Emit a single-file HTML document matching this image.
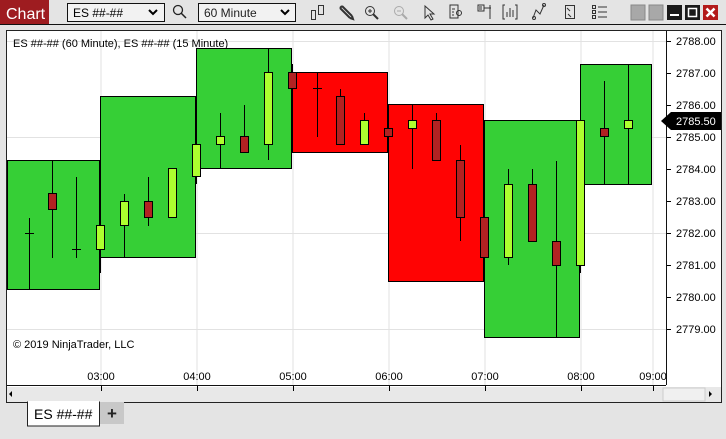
<!DOCTYPE html>
<html><head><meta charset="utf-8"><style>
body{margin:0;width:726px;height:434px;background:#e4e4e4;overflow:hidden;font-family:"Liberation Sans",sans-serif}
</style></head><body>
<svg width="726" height="434" xmlns="http://www.w3.org/2000/svg" font-family="Liberation Sans, sans-serif">
<rect width="726" height="434" fill="#e4e4e4"/>
<!-- toolbar -->
<rect x="0" y="0" width="49" height="24" fill="#9e1c20"/>
<text x="6" y="19" font-size="16" fill="#fff">Chart</text>
<rect x="67.5" y="3.5" width="97" height="18" fill="#f2f2f2" stroke="#111"/>
<text x="73" y="17" font-size="12" fill="#000">ES ##-##</text>
<path d="M149 10l4 4 4-4" stroke="#000" stroke-width="2" fill="none"/>
<circle cx="178" cy="10" r="4.5" stroke="#222" stroke-width="1.3" fill="none"/><path d="M181 13l5 5" stroke="#222" stroke-width="1.5"/>
<rect x="198.5" y="3.5" width="97" height="18" fill="#f2f2f2" stroke="#111"/>
<text x="204" y="17" font-size="12" fill="#222">60 Minute</text>
<path d="M281 10l4 4 4-4" stroke="#000" stroke-width="2" fill="none"/>
<g stroke="#333" fill="none" stroke-width="1">
<rect x="311.5" y="10.5" width="4" height="9"/><rect x="318.5" y="5.5" width="5" height="9"/>
<path d="M340 8l10 10M342 6l10 10M340 8l2-2M350 18l3 1-1-3" stroke-width="2"/>
<circle cx="370" cy="11" r="4.5"/><path d="M368 11h4M370 9v4"/><path d="M373 14l5 5" stroke-width="2"/>
<g stroke="#aaa"><circle cx="399" cy="11" r="4.5"/><path d="M397 11h4"/><path d="M402 14l5 5" stroke-width="2"/></g>
<path d="M425 6v12l3-3 3 5 2-1-3-5h4z"/>
<path d="M450 5h8v13h-8zM452 9h3M452 12h2M452 15h2"/><circle cx="459" cy="13" r="2.5"/>
<path d="M478 5h6v6h-6zM484 8h7M490 5v14M479 7h3M479 9h3"/>
<path d="M505 5h-2v14h2M515 5h2v14h-2M507 12v5M510 8v9M513 10v7"/>
<path d="M533 18l3-8 4 4 4-9" /><circle cx="534" cy="18" r="1.5"/><circle cx="544" cy="5" r="1.5"/>
<path d="M565.5 5.5h9v13h-9zM567 8l3 3M568 14l3 3"/>
<path d="M592.5 5.5h3v3h-3zM592.5 10.5h3v3h-3zM592.5 15.5h3v3h-3zM598 7h9M598 12h9M598 17h9"/>
</g>
<rect x="631" y="5" width="14" height="15" fill="#a8a8a8" stroke="#888"/>
<rect x="649" y="5" width="14" height="15" fill="#a8a8a8" stroke="#888"/>
<rect x="667" y="5" width="15" height="15" fill="#1a1a1a"/><rect x="670" y="14" width="9" height="2" fill="#fff"/>
<rect x="685" y="5" width="15" height="15" fill="#1a1a1a"/><rect x="688.5" y="8.5" width="8" height="8" fill="none" stroke="#fff" stroke-width="1.5"/>
<rect x="703" y="5" width="15" height="15" fill="#b31a1a"/><path d="M706.5 8.5l8 8M714.5 8.5l-8 8" stroke="#fff" stroke-width="2.5"/>
<path d="M0 24.5h726" stroke="#111"/>
<!-- panel -->
<rect x="6.5" y="30.5" width="715" height="372" fill="#fff" stroke="#222"/>
<rect x="7" y="387" width="714" height="15" fill="#e8e8e8"/>
<rect x="663" y="388" width="42" height="13" fill="#f0f0f0" stroke="#ccc"/>
<path d="M12 391v6l-3-3z M709 391v6l3-3z" fill="#000"/>
<g stroke="#e2e2e2" stroke-width="1">
<path d="M101 31v354M197 31v354M293 31v354M389 31v354M485 31v354M581 31v354M653 31v354"/>
<path d="M7 41.5h659M7 137.5h659M7 233.5h659M7 329.5h659"/>
</g>
<path d="M666.5 31v354M7 385.5h659" stroke="#111"/>
<g font-size="11" fill="#000">
<text x="13" y="47">ES ##-## (60 Minute), ES ##-## (15 Minute)</text>
<text x="13" y="348">© 2019 NinjaTrader, LLC</text>
</g>
<!-- price axis -->
<g stroke="#000"><path d="M667 41.5h4M667 73.5h4M667 105.5h4M667 137.5h4M667 169.5h4M667 201.5h4M667 233.5h4M667 265.5h4M667 297.5h4M667 329.5h4"/></g>
<g font-size="11" fill="#000">
<text x="676" y="45">2788.00</text><text x="676" y="77">2787.00</text><text x="676" y="109">2786.00</text><text x="676" y="141">2785.00</text><text x="676" y="173">2784.00</text><text x="676" y="205">2783.00</text><text x="676" y="237">2782.00</text><text x="676" y="269">2781.00</text><text x="676" y="301">2780.00</text><text x="676" y="333">2779.00</text>
</g>
<path d="M661 121l10-9h50v18h-50z" fill="#000"/>
<text x="676" y="125" font-size="11" fill="#fff">2785.50</text>
<!-- time axis -->
<g stroke="#000"><path d="M101.5 386v5M197.5 386v5M293.5 386v5M389.5 386v5M485.5 386v5M581.5 386v5M653.5 386v5"/></g>
<g font-size="11" fill="#000" text-anchor="middle">
<text x="101" y="380">03:00</text><text x="197" y="380">04:00</text><text x="293" y="380">05:00</text><text x="389" y="380">06:00</text><text x="485" y="380">07:00</text><text x="581" y="380">08:00</text><text x="653" y="380">09:00</text>
</g>
<!-- hour boxes -->
<g stroke="#000" stroke-width="1">
<rect x="7.5" y="160.5" width="92" height="129" fill="#36cf36"/>
<rect x="100.5" y="96.5" width="95" height="161" fill="#36cf36"/>
<rect x="196.5" y="48.5" width="95" height="120" fill="#36cf36"/>
<rect x="292.5" y="72.5" width="95" height="80" fill="#ff0303"/>
<rect x="388.5" y="104.5" width="95" height="177" fill="#ff0303"/>
<rect x="484.5" y="120.5" width="95" height="217" fill="#36cf36"/>
<rect x="580.5" y="64.5" width="71" height="120" fill="#36cf36"/>
</g>
<!-- wicks -->
<g stroke="#000" stroke-width="1">
<path d="M29.5 218v71M52.5 160v98M76.5 177v81M100.5 249v24M124.5 194v63M148.5 177v49M196.5 176v8M220.5 113v55M244.5 105v47M268.5 48v112M292.5 64v24M317.5 72v65M340.5 89v55M364.5 113v31M412.5 104v65M436.5 113v47M460.5 145v96M508.5 169v96M532.5 169v72M556.5 161v176M580.5 265v8M604.5 81v103M628.5 64v120"/>
<path d="M25 233.5h9M72 249.5h9M313 88.5h9"/>
</g>
<!-- bodies -->
<g stroke="#000" stroke-width="1">
<rect x="48.5" y="193.5" width="8" height="16" fill="#b22222"/>
<rect x="96.5" y="225.5" width="8" height="24" fill="#adff2f"/>
<rect x="120.5" y="201.5" width="8" height="24" fill="#adff2f"/>
<rect x="144.5" y="201.5" width="8" height="16" fill="#b22222"/>
<rect x="168.5" y="168.5" width="8" height="49" fill="#adff2f"/>
<rect x="192.5" y="144.5" width="8" height="32" fill="#adff2f"/>
<rect x="216.5" y="136.5" width="8" height="8" fill="#adff2f"/>
<rect x="240.5" y="136.5" width="8" height="16" fill="#b22222"/>
<rect x="264.5" y="72.5" width="8" height="72" fill="#adff2f"/>
<rect x="288.5" y="72.5" width="8" height="16" fill="#b22222"/>
<rect x="336.5" y="96.5" width="8" height="48" fill="#b22222"/>
<rect x="360.5" y="120.5" width="8" height="24" fill="#adff2f"/>
<rect x="384.5" y="128.5" width="8" height="8" fill="#b22222"/>
<rect x="408.5" y="120.5" width="8" height="8" fill="#adff2f"/>
<rect x="432.5" y="120.5" width="8" height="40" fill="#b22222"/>
<rect x="456.5" y="160.5" width="8" height="57" fill="#b22222"/>
<rect x="480.5" y="217.5" width="8" height="40" fill="#b22222"/>
<rect x="504.5" y="184.5" width="8" height="73" fill="#adff2f"/>
<rect x="528.5" y="184.5" width="8" height="57" fill="#b22222"/>
<rect x="552.5" y="241.5" width="8" height="24" fill="#b22222"/>
<rect x="576.5" y="120.5" width="8" height="145" fill="#adff2f"/>
<rect x="600.5" y="128.5" width="8" height="8" fill="#b22222"/>
<rect x="624.5" y="120.5" width="8" height="8" fill="#adff2f"/>
</g>
<!-- tabs -->
<rect x="100" y="402" width="24" height="22" fill="#c8c8c8"/>
<text x="112" y="419" font-size="17" text-anchor="middle" fill="#222" font-weight="bold">+</text>
<rect x="27.5" y="402" width="72" height="24" fill="#fff" stroke="#222"/>
<rect x="28" y="401" width="71" height="3" fill="#fff"/>
<text x="34" y="419" font-size="14" fill="#000">ES ##-##</text>
</svg>
</body></html>
